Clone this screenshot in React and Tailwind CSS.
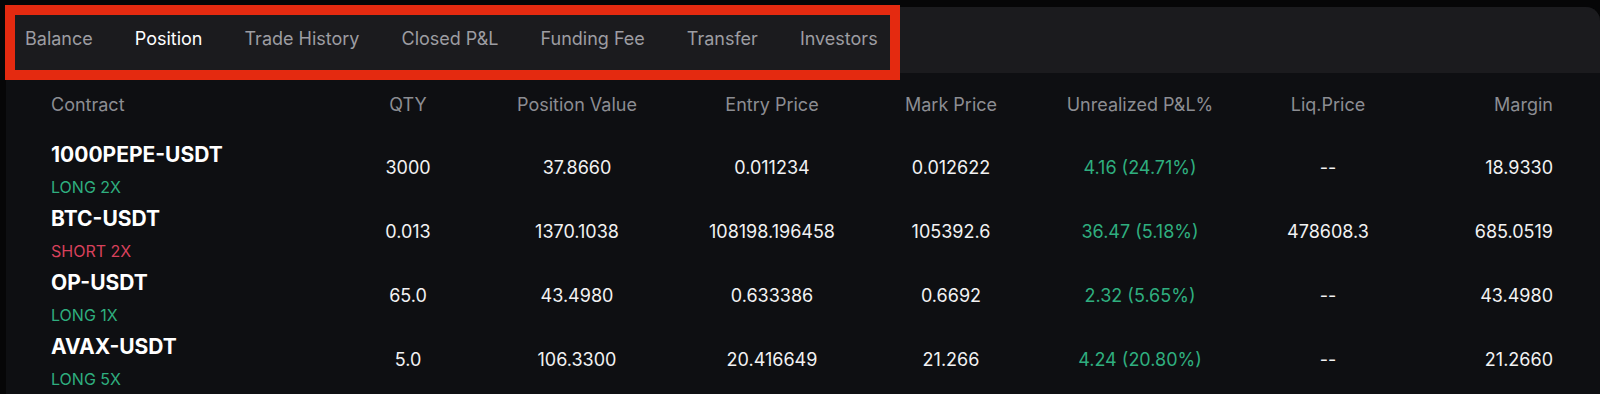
const tabs = ['Balance', 'Position', 'Trade History', 'Closed P&L', 'Funding Fee', 'Transfer', 'Investors']

const columns = [
  { label: 'Contract', align: 'text-left' },
  { label: 'QTY', align: 'text-center' },
  { label: 'Position Value', align: 'text-center' },
  { label: 'Entry Price', align: 'text-center' },
  { label: 'Mark Price', align: 'text-center' },
  { label: 'Unrealized P&L%', align: 'text-center' },
  { label: 'Liq.Price', align: 'text-center' },
  { label: 'Margin', align: 'text-right' },
]

const positions = [
  { symbol: '1000PEPE-USDT', side: 'LONG 2X', qty: '3000', value: '37.8660', entry: '0.011234', mark: '0.012622', pnl: '4.16 (24.71%)', liq: '--', margin: '18.9330' },
  { symbol: 'BTC-USDT', side: 'SHORT 2X', qty: '0.013', value: '1370.1038', entry: '108198.196458', mark: '105392.6', pnl: '36.47 (5.18%)', liq: '478608.3', margin: '685.0519' },
  { symbol: 'OP-USDT', side: 'LONG 1X', qty: '65.0', value: '43.4980', entry: '0.633386', mark: '0.6692', pnl: '2.32 (5.65%)', liq: '--', margin: '43.4980' },
  { symbol: 'AVAX-USDT', side: 'LONG 5X', qty: '5.0', value: '106.3300', entry: '20.416649', mark: '21.266', pnl: '4.24 (20.80%)', liq: '--', margin: '21.2660' },
]

const grid = 'grid grid-cols-[272px_170px_168px_222px_136px_242px_134px_158px] items-center'

function PositionRow({ p }) {
  const long = p.side.startsWith('LONG')
  return (
    <div className={`${grid} h-[64px] text-[18px] text-[#f2f2f3]`}>
      <div className="flex flex-col gap-[7px] pt-[4px]">
        <span className="text-[21px] font-bold leading-[28px] text-white">{p.symbol}</span>
        <span className={`text-[16px] leading-[22px] ${long ? 'text-[#2fae7f]' : 'text-[#d8415c]'}`}>{p.side}</span>
      </div>
      <div className="text-center">{p.qty}</div>
      <div className="text-center">{p.value}</div>
      <div className="text-center">{p.entry}</div>
      <div className="text-center">{p.mark}</div>
      <div className="text-center text-[#2fae7f]">{p.pnl}</div>
      <div className="text-center">{p.liq}</div>
      <div className="text-right">{p.margin}</div>
    </div>
  )
}

export default function App() {
  return (
    <div className="relative h-[394px] w-[1600px] overflow-hidden bg-[#060607] pt-[7px] pl-[6px] font-['Inter','Noto_Sans',sans-serif]">
      <div className="h-full overflow-hidden rounded-tr-[14px] bg-[#0e0f12]">
        <nav className="flex h-[66px] items-center gap-[42px] bg-[#1b1b1e] pb-[4px] pl-[19px] text-[18px]">
          {tabs.map((t) => (
            <span key={t} className={t === 'Position' ? 'text-white' : 'text-[#9d9da2]'}>
              {t}
            </span>
          ))}
        </nav>
        <div className="pl-[45px] pr-[47px]">
          <div className={`${grid} h-[62px] text-[18px] text-[#8c8d92]`}>
            {columns.map((c) => (
              <div key={c.label} className={c.align}>
                {c.label}
              </div>
            ))}
          </div>
          {positions.map((p) => (
            <PositionRow key={p.symbol} p={p} />
          ))}
        </div>
      </div>
      <div className="pointer-events-none absolute left-[5px] top-[5px] h-[75px] w-[895px] border-[10px] border-[#e42a10]" />
    </div>
  )
}
